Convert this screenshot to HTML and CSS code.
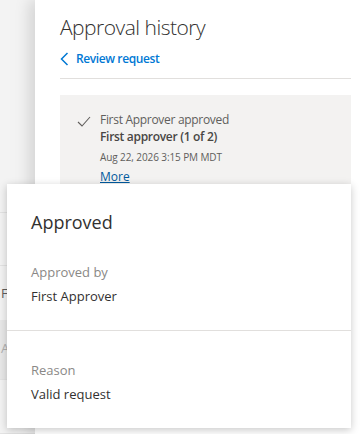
FILE: index.html
```html
<!DOCTYPE html>
<html lang="en">
<head>
    <meta charset="UTF-8">
    <meta name="viewport" content="width=device-width, initial-scale=1.0">
    <title>Approval history</title>
    <link rel="stylesheet" href="styles.css">
</head>
<body>
    <div class="page">
        <div class="page-row row-top"></div>
        <div class="page-row row-a"></div>
        <div class="page-row row-b"><span>F</span></div>
        <div class="page-row row-c"><span>A</span></div>
        <div class="page-row row-d"></div>
    </div>

    <div class="panel">
        <h1 class="title">Approval history</h1>
        <a class="back-link" href="#">
            <svg width="9" height="14" viewBox="0 0 9 14"><path d="M7.5 1 L1.5 7 L7.5 13" fill="none" stroke="#0078d4" stroke-width="1.5"/></svg>
            Review request
        </a>
        <div class="divider"></div>
        <div class="history-card">
            <svg class="check" width="14" height="11" viewBox="0 0 14 11"><path d="M1 6 L5 10 L13 1" fill="none" stroke="#605e5c" stroke-width="1.1"/></svg>
            <div class="history-text">
                <div class="history-line">First Approver approved</div>
                <div class="history-line bold">First approver (1 of 2)</div>
                <div class="history-date">Aug 22, 2026 3:15 PM MDT</div>
                <a class="more-link" href="#">More</a>
            </div>
        </div>
    </div>

    <div class="popup">
        <h2 class="popup-title">Approved</h2>
        <div class="popup-section">
            <div class="field-label">Approved by</div>
            <div class="field-value">First Approver</div>
        </div>
        <div class="popup-section section-last">
            <div class="field-label">Reason</div>
            <div class="field-value">Valid request</div>
        </div>
    </div>
</body>
</html>
```

FILE: styles.css
```css
body {
    margin: 0;
    height: 434px;
    overflow: hidden;
    display: flex;
    background-color: #f3f3f3;
    font-family: "Open Sans", "Noto Sans", sans-serif;
    color: #323130;
}
.page {
    width: 35px;
    flex-shrink: 0;
    overflow: hidden;
    font-size: 13px;
    color: #605e5c;
}
.page-row {
    border-bottom: 1px solid #e3e3e3;
    white-space: nowrap;
    box-sizing: border-box;
}
.row-top {
    height: 213px;
}
.row-a {
    height: 53px;
}
.row-b {
    height: 54px;
    padding: 18px 0 0 1px;
    border-bottom: none;
}
.row-c {
    height: 60px;
    padding: 19px 0 0 1px;
    background-color: #e8e8e8;
    color: #b0b0b0;
}
.row-d {
    height: 54px;
}
.panel {
    flex: 1;
    background: white;
    padding: 0 11px 0 25px;
    box-shadow: -6px 0 14px rgba(0,0,0,0.13);
    position: relative;
}
.title {
    font-size: 21px;
    font-weight: 300;
    letter-spacing: -0.5px;
    margin: 12px 0 0;
    line-height: 30px;
}
.back-link {
    display: flex;
    align-items: center;
    gap: 7px;
    margin-top: 9px;
    color: #0078d4;
    font-size: 12px;
    font-weight: 600;
    letter-spacing: -0.4px;
    text-decoration: none;
    line-height: 16px;
}
.divider {
    height: 1px;
    background: #e1dfdd;
    margin-top: 11px;
}
.history-card {
    margin-top: 16px;
    background: #f3f2f1;
    display: flex;
    padding: 16px 0 20px 17px;
    gap: 9px;
}
.check {
    margin-top: 5px;
}
.history-line {
    font-size: 12px;
    line-height: 17px;
    letter-spacing: -0.3px;
    color: #605e5c;
}
.bold {
    font-weight: 600;
    color: #484644;
}
.history-date {
    font-size: 10px;
    margin-top: 5px;
    line-height: 14px;
    letter-spacing: -0.1px;
    color: #605e5c;
}
.more-link {
    font-size: 12px;
    color: #005a9e;
    line-height: 16px;
}
.popup {
    position: absolute;
    left: 7px;
    top: 184px;
    width: 344px;
    height: 244px;
    background: white;
    box-shadow: 0 2px 8px rgba(0,0,0,0.22);
}
.popup-title {
    font-size: 18px;
    font-weight: 400;
    margin: 26px 0 0 24px;
    line-height: 24px;
}
.popup-section {
    padding: 29px 24px 25px;
    border-bottom: 1px solid #e1dfdd;
}
.section-last {
    border-bottom: none;
    padding-top: 30px;
}
.field-label {
    font-size: 13px;
    color: #8a8886;
    line-height: 18px;
}
.field-value {
    font-size: 13px;
    margin-top: 6px;
    line-height: 18px;
}
```
